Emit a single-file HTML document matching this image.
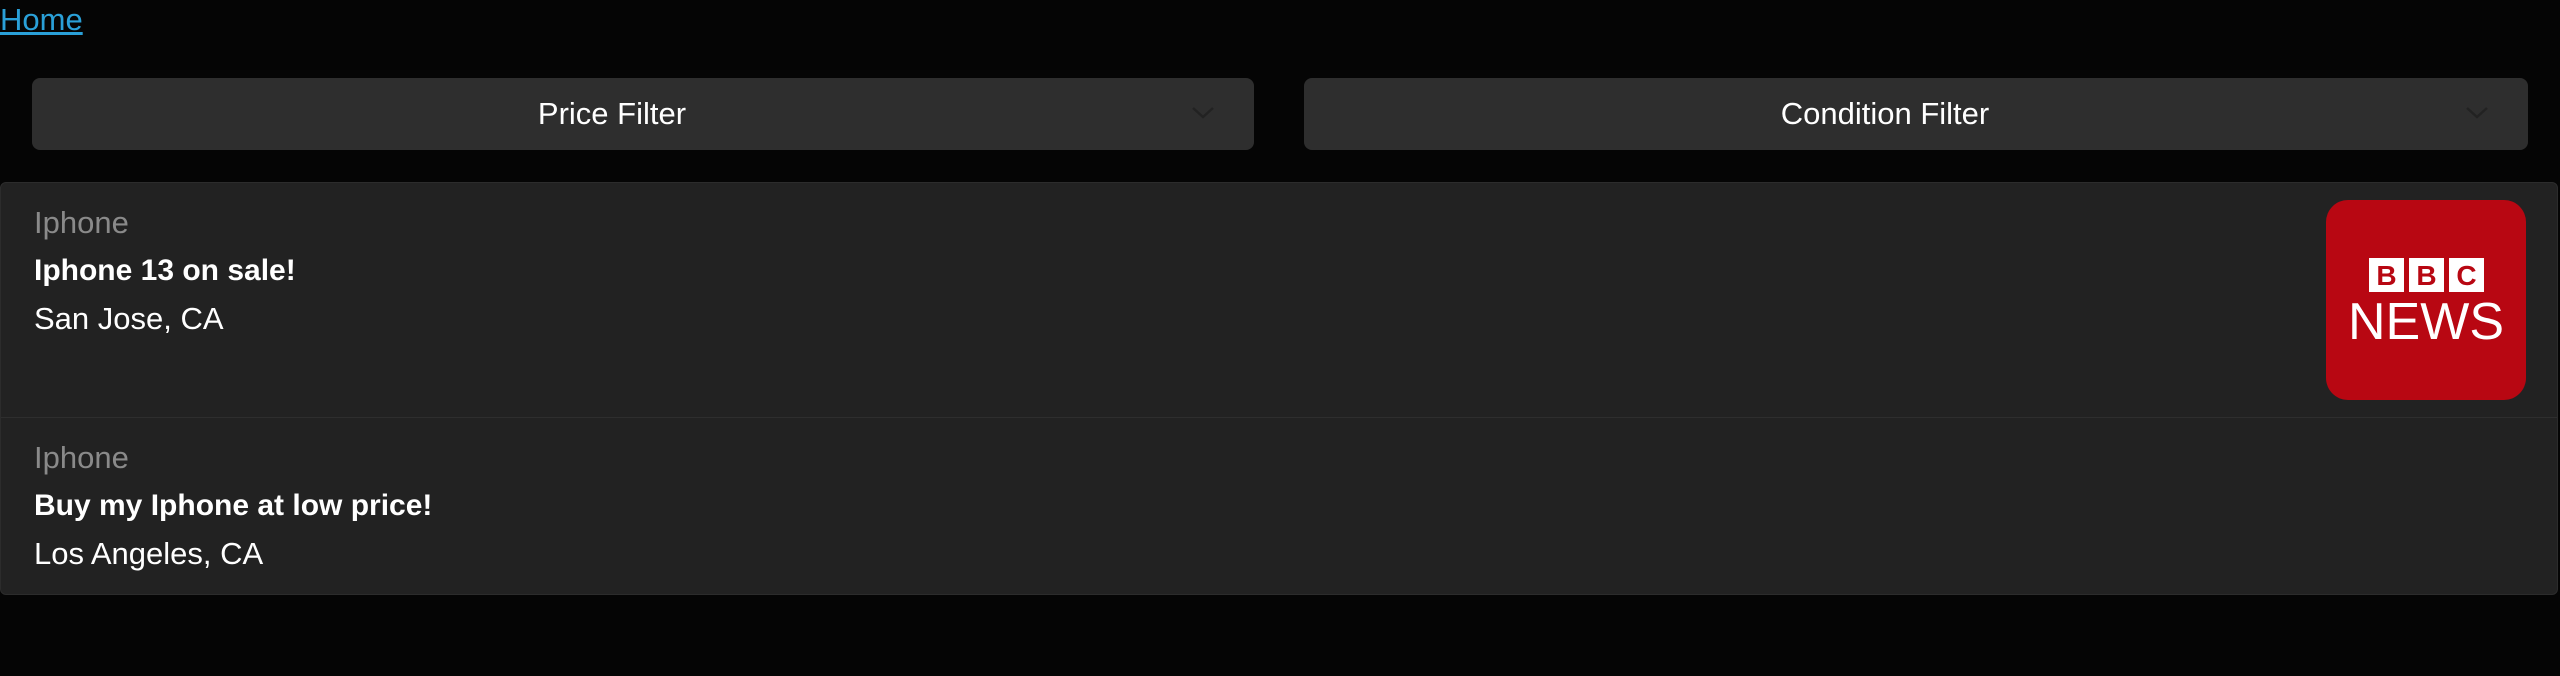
<!DOCTYPE html>
<html><head><meta charset="utf-8"><style>
body{margin:0;width:2560px;height:676px;background:#050505;font-family:"Liberation Sans",sans-serif;overflow:hidden;position:relative}
a{position:absolute;left:0;top:0;font-size:31px;line-height:40px;color:#2aa0d8;text-decoration:underline}
.f{position:absolute;top:78px;height:72px;background:#2e2e2e;border-radius:8px;color:#fff;font-size:31px;line-height:72px;text-align:center;box-sizing:border-box;padding-right:62px}
.f svg{position:absolute;right:40px;top:28px}
.card{position:absolute;left:0;top:182px;width:2556px;height:411px;background:#222;border:1px solid #2c2c2c;border-radius:6px}
.item{position:relative;padding:16px 33px;font-size:31px;line-height:48px;color:#fff}
.g{color:#8a8a8a}.b{font-weight:bold;font-size:30px}
.logo{position:absolute;left:2325px;top:17px;width:200px;height:200px;background:#b80712;border-radius:22px}
.bx{position:absolute;top:58px;width:35px;height:34px;background:#fff;color:#b80712;font-weight:bold;font-size:28px;line-height:35px;text-align:center}
.news{position:absolute;left:0;width:200px;top:92px;text-align:center;color:#fff;font-size:52px;line-height:60px}
</style></head><body>
<a>Home</a>
<div class="f" style="left:32px;width:1222px">Price Filter<svg width="22" height="14" viewBox="0 0 22 14"><path d="M1 2l10 9 10-9" fill="none" stroke="#222" stroke-width="2.5"/></svg></div>
<div class="f" style="left:1304px;width:1224px">Condition Filter<svg width="22" height="14" viewBox="0 0 22 14"><path d="M1 2l10 9 10-9" fill="none" stroke="#222" stroke-width="2.5"/></svg></div>
<div class="card">
<div class="item" style="height:202px;border-bottom:1px solid #2e2e2e">
<div class="g">Iphone</div><div class="b">Iphone 13 on sale!</div><div>San Jose, CA</div>
<div class="logo"><div class="bx" style="left:43px">B</div><div class="bx" style="left:83px">B</div><div class="bx" style="left:123px">C</div><div class="news">NEWS</div></div>
</div>
<div class="item">
<div class="g">Iphone</div><div class="b">Buy my Iphone at low price!</div><div>Los Angeles, CA</div>
</div>
</div>
</body></html>
